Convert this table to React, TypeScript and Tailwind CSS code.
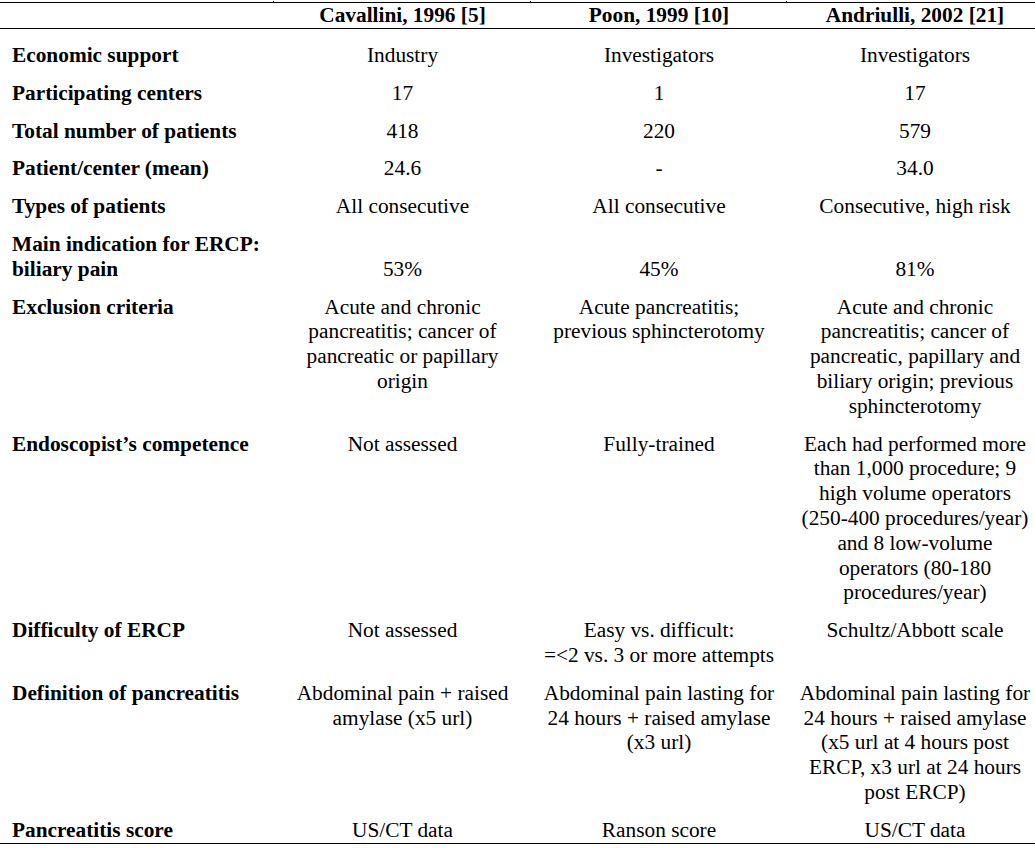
import React from "react";

type Row = {
  label: React.ReactNode;
  cells: string[][];
  bottom?: boolean;
};

const rows: Row[] = [
  { label: "Economic support", cells: [["Industry"], ["Investigators"], ["Investigators"]] },
  { label: "Participating centers", cells: [["17"], ["1"], ["17"]] },
  { label: "Total number of patients", cells: [["418"], ["220"], ["579"]] },
  { label: "Patient/center (mean)", cells: [["24.6"], ["-"], ["34.0"]] },
  {
    label: "Types of patients",
    cells: [["All consecutive"], ["All consecutive"], ["Consecutive, high risk"]],
  },
  {
    label: (
      <>
        Main indication for ERCP:
        <br />
        biliary pain
      </>
    ),
    cells: [["53%"], ["45%"], ["81%"]],
    bottom: true,
  },
  {
    label: "Exclusion criteria",
    cells: [
      ["Acute and chronic", "pancreatitis; cancer of", "pancreatic or papillary", "origin"],
      ["Acute pancreatitis;", "previous sphincterotomy"],
      [
        "Acute and chronic",
        "pancreatitis; cancer of",
        "pancreatic, papillary and",
        "biliary origin; previous",
        "sphincterotomy",
      ],
    ],
  },
  {
    label: "Endoscopist\u2019s competence",
    cells: [
      ["Not assessed"],
      ["Fully-trained"],
      [
        "Each had performed more",
        "than 1,000 procedure; 9",
        "high volume operators",
        "(250-400 procedures/year)",
        "and 8 low-volume",
        "operators (80-180",
        "procedures/year)",
      ],
    ],
  },
  {
    label: "Difficulty of ERCP",
    cells: [
      ["Not assessed"],
      ["Easy vs. difficult:", "=<2 vs. 3 or more attempts"],
      ["Schultz/Abbott scale"],
    ],
  },
  {
    label: "Definition of pancreatitis",
    cells: [
      ["Abdominal pain + raised", "amylase (x5 url)"],
      ["Abdominal pain lasting for", "24 hours + raised amylase", "(x3 url)"],
      [
        "Abdominal pain lasting for",
        "24 hours + raised amylase",
        "(x5 url at 4 hours post",
        "ERCP, x3 url at 24 hours",
        "post ERCP)",
      ],
    ],
  },
  {
    label: "Pancreatitis score",
    cells: [["US/CT data"], ["Ranson score"], ["US/CT data"]],
  },
];

function Tick({ top }: { top: boolean }) {
  return (
    <span
      className={
        "absolute left-[-1px] w-px h-px bg-black " + (top ? "top-[-2px]" : "bottom-[-2px]")
      }
    />
  );
}

export default function App() {
  return (
    <div className="w-[1035px] h-[848px] overflow-hidden bg-white text-black font-['Liberation_Serif','Times_New_Roman',serif] text-[21.33px] leading-[24.8px]">
      <div className="w-[1043px] pt-[2px]">
        {/* header */}
        <div className="grid grid-cols-[274px_257px_256px_256px] border-t border-b border-black font-bold">
          <div className="h-[25px]" />
          <div className="relative text-center whitespace-nowrap">
            <Tick top />
            Cavallini, 1996 [5]
          </div>
          <div className="relative text-center whitespace-nowrap">
            <Tick top />
            Poon, 1999 [10]
          </div>
          <div className="relative text-center whitespace-nowrap">
            <Tick top />
            Andriulli, 2002 [21]
          </div>
        </div>
        {/* body */}
        <div className="grid grid-cols-[274px_257px_256px_256px] border-b border-black pt-[1px]">
          {rows.map((r, i) => (
            <React.Fragment key={i}>
              <div className="pt-[13px] pl-[12px] font-bold whitespace-nowrap">{r.label}</div>
              {r.cells.map((c, j) => (
                <div
                  key={j}
                  className={
                    "pt-[13px] text-center whitespace-nowrap " + (r.bottom ? "self-end" : "")
                  }
                >
                  {c.map((line, k) => (
                    <div key={k}>{line}</div>
                  ))}
                </div>
              ))}
            </React.Fragment>
          ))}
        </div>
        <div className="pl-[2px] whitespace-nowrap">
          <span className="text-[18px]">* mean of all trials in the meta-analysis</span>
        </div>
      </div>
    </div>
  );
}
